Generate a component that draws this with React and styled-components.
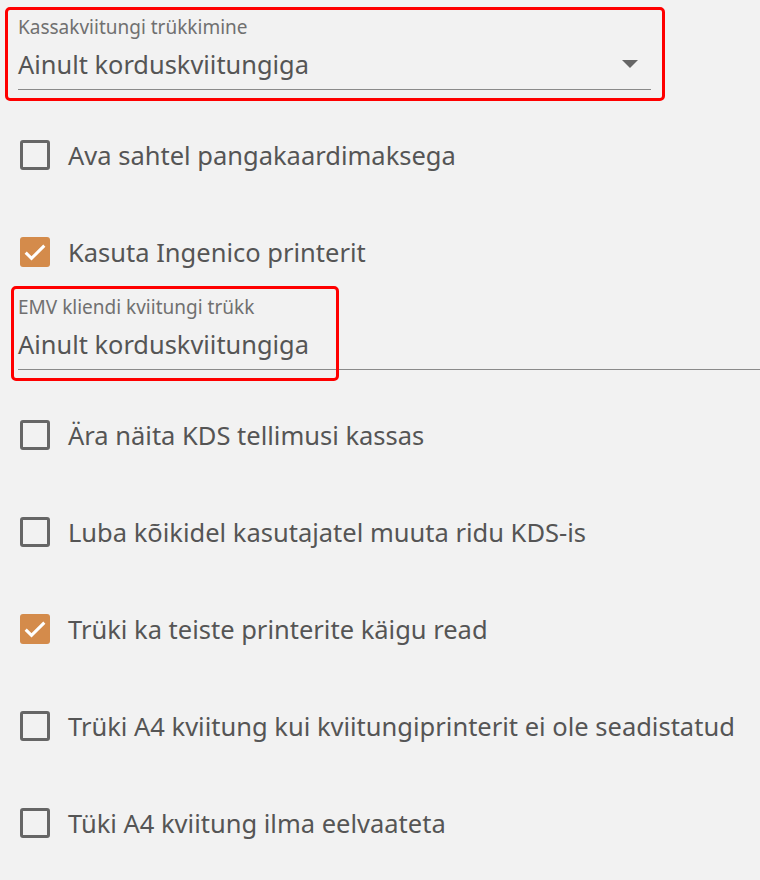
import styled, { createGlobalStyle } from "styled-components";

const GlobalStyle = createGlobalStyle`
  body {
    margin: 0;
    background: #f2f2f2;
    font-family: "Noto Sans", "Open Sans", sans-serif;
  }
`;

const settings = [
  { type: "select", label: "Kassakviitungi trükkimine", value: "Ainult korduskviitungiga", arrow: true, highlight: { top: -7, left: -13, right: -14, bottom: -12 } },
  { type: "check", label: "Ava sahtel pangakaardimaksega", checked: false },
  { type: "check", label: "Kasuta Ingenico printerit", checked: true },
  { type: "select", label: "EMV kliendi kviitungi trükk", value: "Ainult korduskviitungiga", wide: true, highlight: { top: -8, left: -7, width: 328, bottom: -12 } },
  { type: "check", label: "Ära näita KDS tellimusi kassas", checked: false },
  { type: "check", label: "Luba kõikidel kasutajatel muuta ridu KDS-is", checked: false },
  { type: "check", label: "Trüki ka teiste printerite käigu read", checked: true },
  { type: "check", label: "Trüki A4 kviitung kui kviitungiprinterit ei ole seadistatud", checked: false },
  { type: "check", label: "Tüki A4 kviitung ilma eelvaateta", checked: false },
];

const App = () => {
  return (
    <Page>
      <GlobalStyle />
      {settings.map((item, i) => {
        const prev = settings[i - 1];
        if (item.type === "select") {
          return (
            <Field key={i} $wide={item.wide} $first={i === 0}>
              <FieldLabel>{item.label}</FieldLabel>
              <FieldValue>
                <span>{item.value}</span>
                {item.arrow && <Arrow />}
              </FieldValue>
              <Highlight style={item.highlight} />
            </Field>
          );
        }
        return (
          <CheckRow key={i} $afterField={prev && prev.type === "select"}>
            <Box $checked={item.checked}>
              {item.checked && (
                <svg width="28" height="28" viewBox="0 0 24 24">
                  <path d="M4 12.5l5 5L20 6.5" fill="none" stroke="#fff" strokeWidth="2.6" />
                </svg>
              )}
            </Box>
            <CheckText>{item.label}</CheckText>
          </CheckRow>
        );
      })}
    </Page>
  );
};

export default App;

const Page = styled.div`
  width: 760px;
  height: 880px;
  box-sizing: border-box;
  padding-left: 18px;
  overflow: hidden;
  display: flex;
  flex-direction: column;
  color: #555;
`;

const Field = styled.div`
  position: relative;
  width: ${(p) => (p.$wide ? "760px" : "633px")};
  margin-top: ${(p) => (p.$first ? "14px" : "27px")};
  border-bottom: 1px solid #8a8a8a;
  padding-bottom: 7px;
`;

const FieldLabel = styled.div`
  font-size: 19px;
  line-height: 24px;
  padding-top: 1px;
  color: #707070;
`;

const FieldValue = styled.div`
  margin-top: 7px;
  font-size: 25.4px;
  line-height: 36px;
  display: flex;
  align-items: center;
  justify-content: space-between;
`;

const Arrow = styled.div`
  width: 0;
  height: 0;
  margin-right: 13px;
  border-left: 8px solid transparent;
  border-right: 8px solid transparent;
  border-top: 8px solid #666;
`;

const Highlight = styled.div`
  position: absolute;
  box-sizing: border-box;
  border: 3px solid #f00;
  border-radius: 5px;
  pointer-events: none;
`;

const CheckRow = styled.div`
  display: flex;
  align-items: center;
  gap: 18px;
  height: 30px;
  margin-top: ${(p) => (p.$afterField ? "50px" : "67px")};
  padding-left: 2px;
`;

const Box = styled.div`
  width: 30px;
  height: 30px;
  box-sizing: border-box;
  flex-shrink: 0;
  border-radius: 3px;
  display: flex;
  align-items: center;
  justify-content: center;
  background: ${(p) => (p.$checked ? "#d48b4b" : "transparent")};
  border: ${(p) => (p.$checked ? "none" : "3px solid #666")};
`;

const CheckText = styled.span`
  font-size: 25.5px;
  white-space: nowrap;
`;
